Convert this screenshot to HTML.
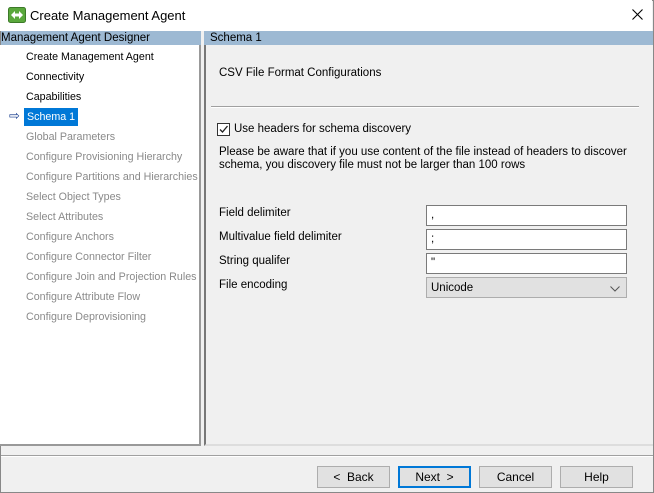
<!DOCTYPE html>
<html><head><style>
*{margin:0;padding:0;box-sizing:border-box}
body{width:654px;height:493px;overflow:hidden;font-family:"Liberation Sans",sans-serif;font-size:12px;color:#000;background:#f0f0f0;position:relative}
.win{position:absolute;left:0;top:0;width:654px;height:493px;border:1px solid #888;background:#f0f0f0}
.title{position:absolute;left:0;top:0;width:652px;height:31px;background:#fff}
.tt{position:absolute;left:30px;top:8px;font-size:13px}
.hdr{position:absolute;top:31px;height:14px;background:#9db9d3;font-size:11.5px;line-height:14px;white-space:nowrap;overflow:hidden}
.left{position:absolute;left:0;top:45px;width:201px;height:401px;background:#fff;border-right:2px solid #999;border-bottom:2px solid #999}
.left div{position:absolute;left:26px;font-size:10.7px;white-space:nowrap;top:0}
.g{color:#8a8a8a}
.sel{background:#0078d7;color:#fff;padding:0 3px;left:24px!important;height:18px;line-height:18px}
.right{position:absolute;left:204px;top:45px;width:449px;height:401px;border-left:2px solid #777;border-bottom:2px solid #ddd}
.t{position:absolute;font-size:11.5px;white-space:nowrap}
.inp{position:absolute;left:426px;width:201px;height:21px;background:#fff;border:1px solid #7a7a7a;font-size:11.5px;padding:3px 4px}
.btn{position:absolute;top:466px;width:73px;height:22px;background:#e1e1e1;border:1px solid #adadad;text-align:center;line-height:20px;font-size:12px}
</style></head><body>
<div class="win"></div>
<div class="title">
<svg style="position:absolute;left:8px;top:7px" width="18" height="16"><rect x="0.5" y="0.5" width="17" height="15" rx="2" fill="#5aa83c" stroke="#3c7a28"/><path d="M3 8 L7 4 V6.5 H11 V4 L15 8 L11 12 V9.5 H7 V12 Z" fill="#fff"/></svg>
<span class="tt">Create Management Agent</span>
<svg style="position:absolute;left:632px;top:9px" width="11" height="11"><path d="M0.5 0.5 L10.5 10.5 M10.5 0.5 L0.5 10.5" stroke="#000" stroke-width="1.1"/></svg></div>
<div class="hdr" style="left:1px;width:200px">Management Agent Designer</div>
<div class="hdr" style="left:204px;width:449px;padding-left:6px">Schema 1</div>
<div class="left">
<div style="top:6px">Create Management Agent</div>
<div style="top:26px">Connectivity</div>
<div style="top:46px">Capabilities</div>
<span style="position:absolute;left:9px;top:63px;color:#1a3f8f;font-size:13px">⇨</span>
<div class="sel" style="top:63px">Schema 1</div>
<div class="g" style="top:86px">Global Parameters</div>
<div class="g" style="top:106px">Configure Provisioning Hierarchy</div>
<div class="g" style="top:126px">Configure Partitions and Hierarchies</div>
<div class="g" style="top:146px">Select Object Types</div>
<div class="g" style="top:166px">Select Attributes</div>
<div class="g" style="top:186px">Configure Anchors</div>
<div class="g" style="top:206px">Configure Connector Filter</div>
<div class="g" style="top:226px">Configure Join and Projection Rules</div>
<div class="g" style="top:246px">Configure Attribute Flow</div>
<div class="g" style="top:266px">Configure Deprovisioning</div>
</div>
<div class="right"></div>
<div class="t" style="left:219px;top:67px">CSV File Format Configurations</div>
<div style="position:absolute;left:211px;top:106px;width:428px;height:2px;border-top:1px solid #a0a0a0;border-bottom:1px solid #fff"></div>
<div style="position:absolute;left:217px;top:123px;width:13px;height:13px;border:1px solid #333;background:#fff"><svg width="11" height="11" style="position:absolute;left:0;top:0"><path d="M2 5.5 L4.5 8 L9.5 2" stroke="#222" stroke-width="1.3" fill="none"/></svg></div>
<div class="t" style="left:234px;top:123px">Use headers for schema discovery</div>
<div class="t" style="left:219px;top:146px;line-height:13px">Please be aware that if you use content of the file instead of headers to discover<br>schema, you discovery file must not be larger than 100 rows</div>
<div class="t" style="left:219px;top:207px">Field delimiter</div>
<div class="t" style="left:219px;top:231px">Multivalue field delimiter</div>
<div class="t" style="left:219px;top:255px">String qualifer</div>
<div class="t" style="left:219px;top:279px">File encoding</div>
<div class="inp" style="top:205px">,</div>
<div class="inp" style="top:229px">;</div>
<div class="inp" style="top:253px">"</div>
<div class="inp" style="top:277px;background:#e1e1e1;border-color:#adadad;padding-top:4px">Unicode<svg width="10" height="6" style="position:absolute;right:6px;top:8px"><path d="M0.5 0.5 L5 5 L9.5 0.5" stroke="#555" fill="none"/></svg></div>
<div style="position:absolute;left:1px;top:455px;width:652px;height:2px;border-top:1px solid #a0a0a0;border-bottom:1px solid #fff"></div>
<div class="btn" style="left:317px">&lt; &nbsp;Back</div>
<div class="btn" style="left:398px;border:2px solid #0078d7;line-height:18px">Next &nbsp;&gt;</div>
<div class="btn" style="left:479px">Cancel</div>
<div class="btn" style="left:560px">Help</div>
</body></html>
